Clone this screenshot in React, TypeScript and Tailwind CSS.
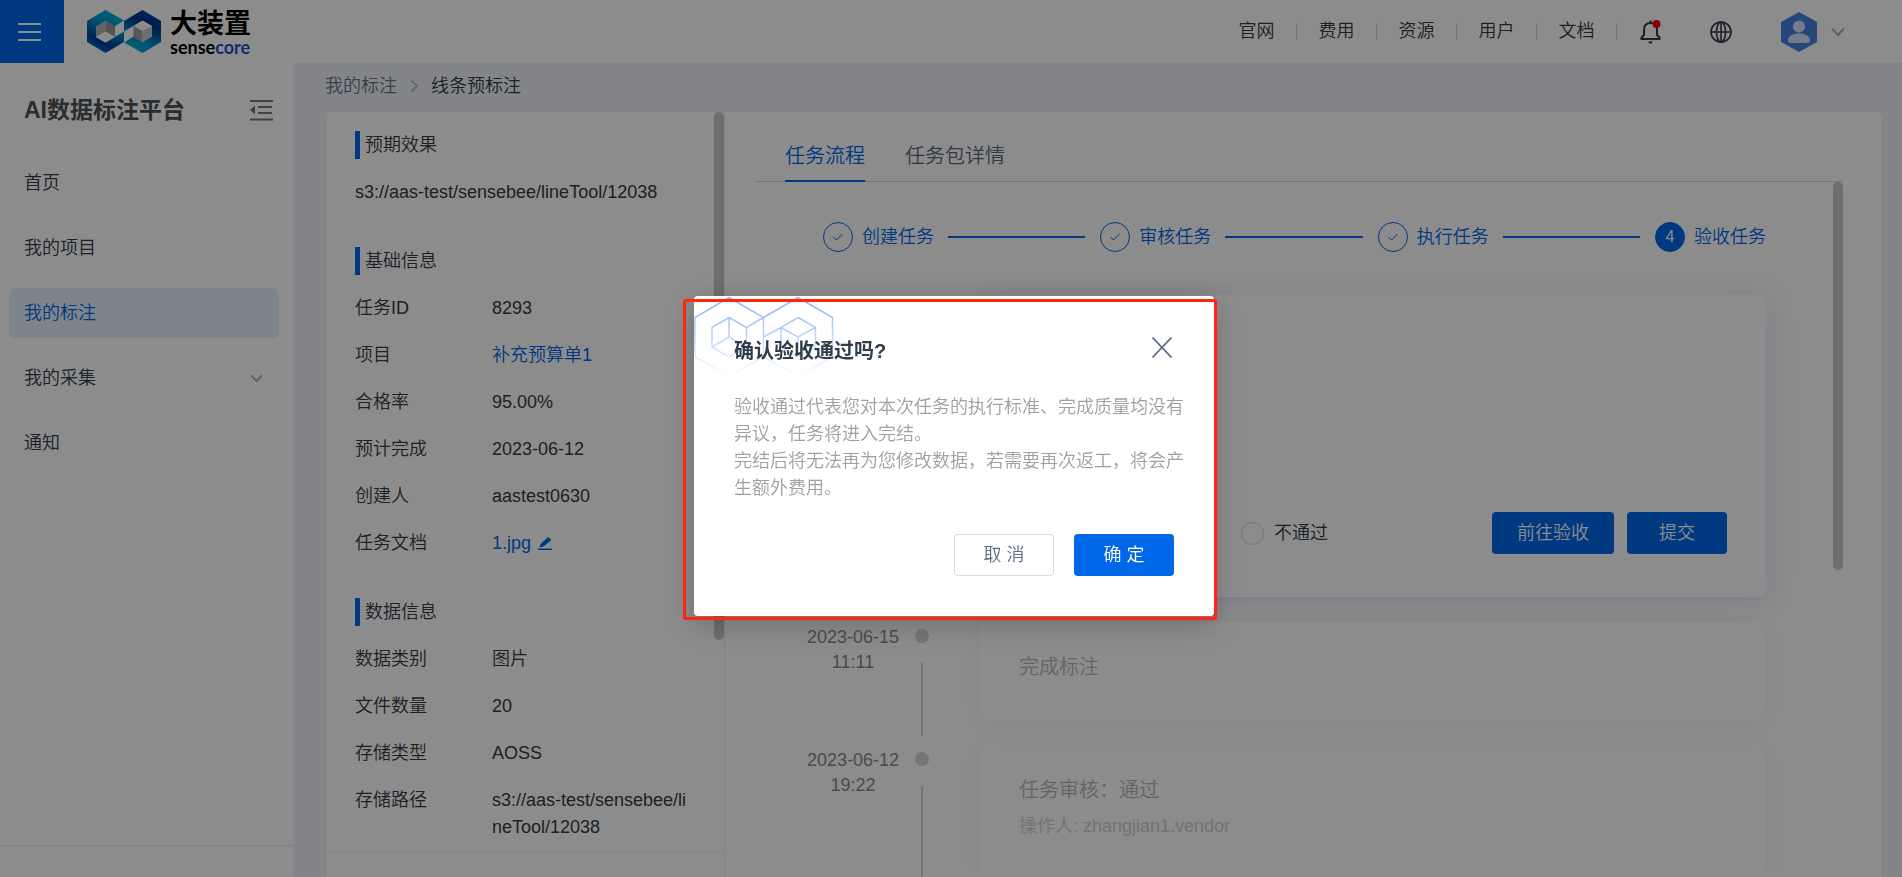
import type { ReactNode } from "react";

const topLinks = ["官网", "费用", "资源", "用户", "文档"];

const menu = [
    { name: "首页" },
    { name: "我的项目" },
    { name: "我的标注", active: true },
    { name: "我的采集", expandable: true },
    { name: "通知" },
];

const steps = [
    { name: "创建任务", done: true },
    { name: "审核任务", done: true },
    { name: "执行任务", done: true },
    { name: "验收任务", done: false },
];

const records = [
    { date: "2023-06-15", time: "11:11", title: "完成标注", height: "h-[98px]" },
    {
        date: "2023-06-12",
        time: "19:22",
        title: "任务审核：通过",
        operator: "操作人: zhangjian1.vendor",
        height: "h-[131px]",
    },
];

function Logo() {
    return (
        <a href="#" className="flex items-center gap-[9px]">
            <svg width="74" height="43" viewBox="0 0 74 43">
                <defs>
                    <linearGradient id="logoLeft" x1="0.7" y1="0" x2="0.3" y2="1">
                        <stop offset="0" stopColor="#00b4dc" />
                        <stop offset="0.35" stopColor="#0096c8" />
                        <stop offset="0.75" stopColor="#003c96" />
                        <stop offset="1" stopColor="#0078c8" />
                    </linearGradient>
                    <linearGradient id="logoRight" x1="0.7" y1="0" x2="0.3" y2="1">
                        <stop offset="0" stopColor="#0046aa" />
                        <stop offset="0.3" stopColor="#00328c" />
                        <stop offset="0.7" stopColor="#0096c8" />
                        <stop offset="1" stopColor="#00b4dc" />
                    </linearGradient>
                </defs>
                <path
                    d="M18.500 0L37 10.500L27.500 16.500L18.500 11L9 16.500V27L18.500 32.500L37 21.500V32L18.500 43L0 32V11Z"
                    fill="url(#logoLeft)"
                />
                <path
                    d="M55.500 43L37 32.500L46.500 26.500L55.500 32L65 26.500V16L55.500 10.500L37 21.500V11L55.500 0L74 11V32Z"
                    fill="url(#logoRight)"
                />
                <path d="M9 16.500L18.500 11V21.500L9 27Z" fill="#b4b4b4" />
                <path d="M18.500 11L28 16.500V27L18.500 21.500Z" fill="#969696" />
                <path d="M18.500 21.500L28 27L18.500 32.500L9 27Z" fill="#ffffff" />
                <path d="M46.500 16L55.500 11L65 16L55.500 21Z" fill="#ffffff" />
                <path d="M46.500 16L55.500 21V32L46.500 26.500Z" fill="#a0a0a0" />
                <path d="M65 16L55.500 21V32L65 26.500Z" fill="#c8c8c8" />
            </svg>
            <span className="flex flex-col pt-[3px]">
                <span className="text-[27px] leading-[28px] font-bold text-black">大装置</span>
                <span className="font-['Lato'] text-[18px] leading-[18px] font-bold text-black">
                    sense<span className="text-[#2850c8]">core</span>
                </span>
            </span>
        </a>
    );
}

function ChevronDown({ className }: { className: string }) {
    return (
        <svg className={className} viewBox="0 0 14 10" fill="none" stroke="#a4afbf" strokeWidth="2">
            <path d="M1 1.500L7 8L13 1.500" />
        </svg>
    );
}

function Header() {
    return (
        <header className="flex h-[63px] shrink-0 items-center bg-white">
            <button aria-label="菜单" className="flex h-full w-16 flex-col items-start justify-center gap-[6px] bg-[#0068e8] pl-[18px]">
                <span className="h-[2px] w-[23px] bg-white"></span>
                <span className="h-[2px] w-[23px] bg-white"></span>
                <span className="h-[2px] w-[23px] bg-white"></span>
            </button>
            <div className="ml-[23px]">
                <Logo />
            </div>
            <nav className="ml-auto flex items-center">
                {topLinks.map((link) => (
                    <a
                        key={link}
                        href="#"
                        className="flex h-[17px] w-20 items-center justify-center border-r border-[#d3d6e0] text-[18px] text-[#333b47]"
                    >
                        {link}
                    </a>
                ))}
            </nav>
            <div className="mr-[57px] flex items-center">
                <button aria-label="消息" className="ml-[23px]">
                    <svg width="22" height="25" viewBox="0 0 22 25" fill="none" stroke="#333b47" strokeWidth="2">
                        <path d="M1.500 20V18.500L4 16V10.500C4 6.500 6.500 4 10.500 4S17 6.500 17 10.500V16L19.500 18.500V20Z" />
                        <path d="M10.500 1.500V4" />
                        <path d="M8 22.500H13L11.500 24.500H9.500Z" fill="#333b47" stroke="none" />
                        <circle cx="16.500" cy="5" r="4" fill="#ff0000" stroke="none" />
                    </svg>
                </button>
                <button aria-label="语言" className="ml-[48px]">
                    <svg width="22" height="22" viewBox="0 0 22 22" fill="none" stroke="#333b47" strokeWidth="1.600">
                        <circle cx="11" cy="11" r="10" />
                        <ellipse cx="11" cy="11" rx="4.500" ry="10" />
                        <path d="M11 1V21M1 11H21" />
                    </svg>
                </button>
                <button aria-label="账户" className="ml-[49px] flex items-center gap-[14px]">
                    <svg width="36" height="40" viewBox="0 0 36 40">
                        <path d="M18 0L36 10V30L18 40L0 30V10Z" fill="#4482e2" />
                        <circle cx="18" cy="14.500" r="6" fill="#d3e2ff" />
                        <path d="M7 28C7 24 12 21.500 18 21.500S29 24 29 28C29 30 28 31 26 31H10C8 31 7 30 7 28Z" fill="#d3e2ff" />
                    </svg>
                    <ChevronDown className="h-[10px] w-[14px]" />
                </button>
            </div>
        </header>
    );
}

function Sidebar() {
    return (
        <aside className="flex w-[294px] shrink-0 flex-col bg-white">
            <div className="flex h-[95px] items-center justify-between pr-[21px] pl-6">
                <h1 className="text-[23px] font-bold text-[#4e5257]">AI数据标注平台</h1>
                <button aria-label="收起">
                    <svg width="23" height="21" viewBox="0 0 23 21" fill="#787878">
                        <path d="M0 0H23V2H0ZM8 6H22V8H8ZM8 12H22V14H8ZM0 18.500H23V20.500H0ZM0 10L5 5.500V14.500Z" />
                    </svg>
                </button>
            </div>
            <nav className="flex flex-1 flex-col gap-[15px] px-[9px]">
                {menu.map((item) => (
                    <a
                        key={item.name}
                        href="#"
                        className={`flex h-[50px] items-center justify-between rounded-md pr-4 pl-[15px] text-[18px] ${item.active ? "mr-[6px] bg-[#e4f3ff] text-[#0068e8]" : "text-[#333b47]"
                            }`}
                    >
                        {item.name}
                        {item.expandable && <ChevronDown className="mr-[6px] h-[9px] w-[13px]" />}
                    </a>
                ))}
            </nav>
            <div className="h-8 border-t border-[#e6eaf0]"></div>
        </aside>
    );
}

function Section({ title, children }: { title: string; children: ReactNode }) {
    return (
        <section className="mb-[41px] last:mb-0">
            <h2 className="border-l-[5px] border-[#0068e8] pl-[5px] text-[18px] leading-7">{title}</h2>
            <dl className="mt-5 flex flex-col gap-5 text-[18px] leading-[27px]">{children}</dl>
        </section>
    );
}

function Row({ label, children }: { label: string; children: ReactNode }) {
    return (
        <div className="flex">
            <dt className="w-[137px] shrink-0">{label}</dt>
            <dd className="w-[200px] break-all">{children}</dd>
        </div>
    );
}

function TaskInfo() {
    return (
        <div className="flex w-[399px] shrink-0 border-r border-[#e8ebf0] text-[#333b47]">
            <div className="flex-1">
                <div className="border-b border-[#eef0f4] pt-[19px] pb-[10px] pl-[29px]">
                    <Section title="预期效果">
                        <dd className="leading-[27px]">s3://aas-test/sensebee/lineTool/12038</dd>
                    </Section>
                    <Section title="基础信息">
                        <Row label="任务ID">8293</Row>
                        <Row label="项目">
                            <a href="#" className="text-[#0068e8]">补充预算单1</a>
                        </Row>
                        <Row label="合格率">95.00%</Row>
                        <Row label="预计完成">2023-06-12</Row>
                        <Row label="创建人">aastest0630</Row>
                        <Row label="任务文档">
                            <a href="#" className="flex items-center gap-[7px] text-[#0068e8]">
                                1.jpg
                                <svg width="14" height="13" viewBox="0 0 14 13" fill="#0068e8">
                                    <path d="M1.500 10.500L2.500 7L9.500 0.500H11L13 2.500V3.500L5.500 9.500ZM0 11.500H14V13H0Z" />
                                </svg>
                            </a>
                        </Row>
                    </Section>
                    <Section title="数据信息">
                        <Row label="数据类别">图片</Row>
                        <Row label="文件数量">20</Row>
                        <Row label="存储类型">AOSS</Row>
                        <Row label="存储路径">s3://aas-test/sensebee/lineTool/12038</Row>
                    </Section>
                </div>
            </div>
            <div className="-ml-[10px] h-[528px] w-[10px] rounded-full bg-[#c8c8c8]"></div>
        </div>
    );
}

function Steps() {
    return (
        <ol className="flex items-center text-[18px] text-[#0068e8]">
            {steps.map((step, i) => (
                <li key={step.name} className={`flex items-center ${i < steps.length - 1 ? "flex-1" : ""}`}>
                    <span
                        className={`flex h-[30px] w-[30px] items-center justify-center rounded-full border border-[#0068e8] ${step.done ? "" : "bg-[#0068e8] text-base text-white"
                            }`}
                    >
                        {step.done ? (
                            <svg width="10" height="8" viewBox="0 0 10 8" fill="none" stroke="#0068e8">
                                <path d="M0.500 4L3.500 7L9.500 1" />
                            </svg>
                        ) : (
                            i + 1
                        )}
                    </span>
                    <span className="ml-[9px] leading-[30px]">{step.name}</span>
                    {i < steps.length - 1 && <span className="mr-[15px] ml-[14px] h-[2px] flex-1 bg-[#0068e8]"></span>}
                </li>
            ))}
        </ol>
    );
}

function TaskFlow() {
    return (
        <div className="flex-1 overflow-hidden pt-5 pr-[39px] pl-[30px]">
            <div role="tablist" className="flex gap-10 border-b border-[#d3d6e0] pl-[30px] text-[20px]">
                <button role="tab" aria-selected="true" className="-mb-px h-[50px] border-b-2 border-[#0068e8] text-[#0068e8]">
                    任务流程
                </button>
                <button role="tab" aria-selected="false" className="-mb-px h-[50px] border-b-2 border-transparent text-[#5b6b80]">
                    任务包详情
                </button>
            </div>
            <div className="flex">
                <div className="flex-1 pt-10 pr-[77px] pl-[68px]">
                    <Steps />
                    <div className="mt-[43px] ml-[156px] flex h-[302px] items-end justify-between rounded-lg bg-white pr-[39px] pb-[43px] pl-[262px] shadow-[0_4px_30px_rgba(80,80,220,0.18)]">
                        <label className="flex h-[42px] items-center gap-[10px] text-[18px] text-[#333b47]">
                            <input type="radio" name="result" className="h-[23px] w-[23px] appearance-none rounded-full border border-[#d3d6e0]" />
                            不通过
                        </label>
                        <div className="flex gap-[13px] text-[18px] text-white">
                            <button className="h-[42px] rounded bg-[#0068e8] px-[25px]">前往验收</button>
                            <button className="h-[42px] rounded bg-[#0068e8] px-8">提交</button>
                        </div>
                    </div>
                    <ul className="mt-[25px] flex flex-col gap-[25px]">
                        {records.map((record) => (
                            <li key={record.date} className="flex">
                                <time className="-ml-[18px] w-24 pt-[3px] text-center text-[18px] leading-[25px] text-[#8a8a8a]">
                                    {record.date}
                                    <br />
                                    {record.time}
                                </time>
                                <div className="ml-[14px] flex w-[14px] flex-col items-center pt-[7px]">
                                    <span className="h-[14px] w-[14px] rounded-full bg-[#d5d5d5]"></span>
                                    <span className="mt-5 mb-[-16px] w-[2px] flex-1 bg-[#c8d2e6]"></span>
                                </div>
                                <div
                                    className={`ml-[50px] flex flex-1 flex-col rounded-lg bg-white pt-[30px] pl-10 shadow-[0_2px_20px_rgba(0,0,0,0.05)] ${record.height}`}
                                >
                                    <h3 className="text-[20px] leading-[30px] text-[#b8b8b8]">{record.title}</h3>
                                    {record.operator && (
                                        <p className="mt-2 text-[18px] leading-[27px] text-[#d0d0d0]">{record.operator}</p>
                                    )}
                                </div>
                            </li>
                        ))}
                    </ul>
                </div>
                <div className="-ml-[10px] h-[388px] w-[10px] rounded-full bg-[#c8c8c8]"></div>
            </div>
        </div>
    );
}

function ConfirmDialog() {
    return (
        <div className="fixed inset-0 flex items-start justify-center bg-black/45 pt-[296px] pl-[6px]">
            <div
                role="dialog"
                aria-labelledby="confirm-title"
                className="relative w-[520px] rounded bg-white px-10 pt-10 pb-10 shadow-[0_6px_24px_rgba(0,0,0,0.14),0_9px_36px_8px_rgba(0,0,0,0.08)]"
            >
                <svg className="absolute top-0 left-0" width="140" height="82" viewBox="0 0 140 82" fill="none" stroke="url(#hexFade)" strokeWidth="1.500">
                    <defs>
                        <linearGradient id="hexFade" gradientUnits="userSpaceOnUse" x1="0" y1="0" x2="0" y2="80">
                            <stop offset="0" stopColor="#86b0fa" />
                            <stop offset="0.5" stopColor="#bcd4ff" />
                            <stop offset="1" stopColor="#ffffff" />
                        </linearGradient>
                    </defs>
                    <path d="M35 1.500L69.500 21.500V61L35 80L1 61V21.500Z" />
                    <path d="M69.500 21.500L104 1.500L138.500 21.500V61L104 80L69.500 61" />
                    <path d="M35 21.500L52.500 31.500V51L35 61L18 51V31.500ZM35 21.500V41L18 51M35 41L52.500 51M52.500 31.500L69.500 21.500" />
                    <path d="M104 21.500L121.500 31.500V51L104 61L87 51V31.500ZM87 31.500L104 41L121.500 31.500M104 41V61M69.500 41L87 31.500" />
                </svg>
                <div className="relative flex items-start justify-between">
                    <h2 id="confirm-title" className="text-[20px] leading-[30px] font-bold text-[#2f3c4a]">
                        确认验收通过吗?
                    </h2>
                    <button aria-label="关闭" className="mt-px mr-[2px]">
                        <svg width="20" height="21" viewBox="0 0 20 21" fill="none" stroke="#5b6e86" strokeWidth="1.700">
                            <path d="M0.500 0.500L19.500 20.500M19.500 0.500L0.500 20.500" />
                        </svg>
                    </button>
                </div>
                <p className="mt-7 -mr-[15px] text-[18px] leading-[27px] text-[#a0a0a0]">
                    验收通过代表您对本次任务的执行标准、完成质量均没有异议，任务将进入完结。
                    <br />
                    完结后将无法再为您修改数据，若需要再次返工，将会产生额外费用。
                </p>
                <div className="mt-8 flex justify-end gap-5 text-[18px]">
                    <button className="h-[42px] w-[100px] rounded border border-[#d3dcec] text-[#5b6e86]">取 消</button>
                    <button className="h-[42px] w-[100px] rounded bg-[#0068e8] text-white">确 定</button>
                </div>
                <div className="pointer-events-none absolute top-[3px] -right-[3px] -bottom-1 -left-[11px] rounded-[3px] border-[3px] border-[#ff2414]"></div>
            </div>
        </div>
    );
}

export default function App() {
    return (
        <div className="flex h-screen flex-col overflow-hidden bg-[#f0f3f9] font-['Liberation_Sans','Noto_Sans_CJK_SC',sans-serif] font-[350]">
            <Header />
            <div className="flex min-h-0 flex-1">
                <Sidebar />
                <main className="flex min-w-0 flex-1 flex-col pr-[19px] pl-[31px]">
                    <nav className="flex h-12 shrink-0 items-center pb-[2px] text-[18px] text-[#333b47]">
                        <a href="#" className="text-[#66758a]">我的标注</a>
                        <svg className="mr-[13px] ml-[14px]" width="7" height="12" viewBox="0 0 7 12" fill="none" stroke="#a4afbf" strokeWidth="1.500">
                            <path d="M0.500 0.500L6 6L0.500 11.500" />
                        </svg>
                        <span>线条预标注</span>
                    </nav>
                    <div className="flex min-h-0 flex-1 rounded-t-md border border-b-0 border-[#e9ecf8] bg-white">
                        <TaskInfo />
                        <TaskFlow />
                    </div>
                </main>
            </div>
            <ConfirmDialog />
        </div>
    );
}
